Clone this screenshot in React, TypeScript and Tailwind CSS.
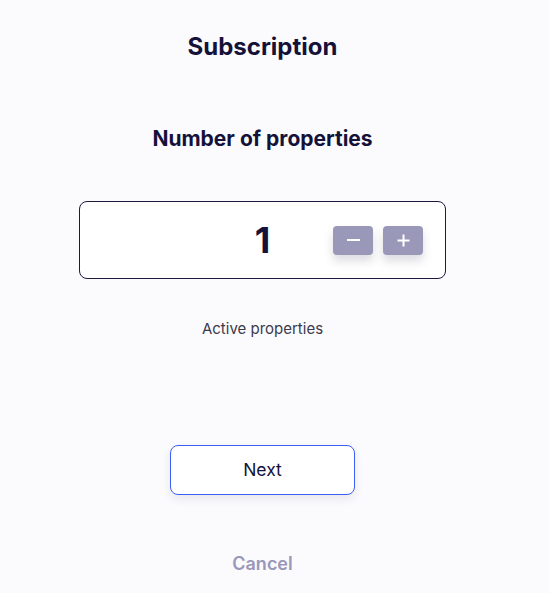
import React, { useState } from "react";

export default function App() {
  const [count, setCount] = useState(1);
  return (
    <div className="min-h-[593px] w-full bg-[#fbfbfe]" style={{ fontFamily: "Inter, 'Noto Sans', sans-serif" }}>
      <div className="w-[525px] flex flex-col items-center">
        <h1 className="mt-[33px] text-[24px] leading-[28px] font-bold text-[#15123a]">Subscription</h1>
        <h2 className="mt-[65px] text-[21px] leading-[26px] font-bold text-[#15123a]">Number of properties</h2>
        <div className="mt-[49px] w-[367px] h-[78px] rounded-[8px] border border-[#1c1840] bg-white relative flex items-center">
          <div className="absolute left-0 right-0 text-center text-[36px] font-bold text-[#15123a] leading-none">{count}</div>
          <div className="ml-auto mr-[22px] flex gap-[10px] relative">
            <button
              onClick={() => setCount(Math.max(0, count - 1))}
              className="w-[40px] h-[29px] rounded-[4px] bg-[#9a98b8] text-white flex items-center justify-center shadow-[0_6px_10px_rgba(60,60,90,0.18)]"
            >
              <span className="block w-[13px] h-[2px] bg-white" />
            </button>
            <button
              onClick={() => setCount(count + 1)}
              className="w-[40px] h-[29px] rounded-[4px] bg-[#9a98b8] text-white flex items-center justify-center shadow-[0_6px_10px_rgba(60,60,90,0.18)]"
            >
              <svg width="13" height="13" viewBox="0 0 13 13">
                <path d="M6.5 0.5v12M0.5 6.5h12" stroke="white" strokeWidth="2" />
              </svg>
            </button>
          </div>
        </div>
        <p className="mt-[40px] text-[15px] leading-[20px] text-[#3b3a4a]">Active properties</p>
        <button className="mt-[106px] w-[185px] h-[50px] rounded-[8px] border border-[#3d5ef5] bg-white text-[17.5px] text-[#15123a] shadow-[0_4px_8px_rgba(60,60,90,0.10)]">
          Next
        </button>
        <button className="mt-[55px] text-[18px] font-semibold text-[#9a98b8]">Cancel</button>
      </div>
    </div>
  );
}
